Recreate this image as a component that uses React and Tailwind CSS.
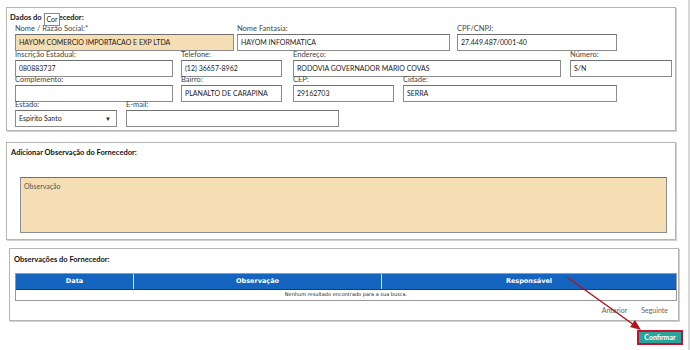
import React from "react";

const Field = ({ label, value, w, ml = "", bg = "bg-white", select = false }) => (
  <div className={`flex flex-col ${w} ${ml}`}>
    <span className="text-[7.5px] leading-[9px] text-[#444] h-[9px] mb-[1px] whitespace-nowrap">
      {label}
    </span>
    <div
      className={`h-[17px] border border-[#8c8c8c] border-t-[#6f6f6f] ${bg} flex items-center px-[3px] text-[7px] text-[#222] justify-between`}
    >
      <span className="whitespace-nowrap">{value}</span>
      {select && <span className="text-[6px] text-[#222] mr-[2px]">▼</span>}
    </div>
  </div>
);

const Panel = ({ className, children }) => (
  <div
    className={`relative border border-[#b5b5b5] shadow-[1px_1px_0_#d0d0d0] bg-white ${className}`}
  >
    {children}
  </div>
);

const App = () => {
  return (
    <div
      className="relative w-[690px] h-[350px] bg-white overflow-hidden"
      style={{ fontFamily: "Lato, 'Noto Sans', sans-serif" }}
    >
      <div className="absolute right-0 top-0 w-[2px] h-full bg-[#d8d8d8]" />

      <div className="pt-[7px] pl-[6px] w-[676px]">
        {/* Dados do fornecedor */}
        <Panel className="h-[124px] pl-[8px] pt-[5px]">
          <div className="text-[7.5px] font-bold text-[#111] leading-[9px] -ml-[5px]">
            Dados do Fornecedor:
          </div>
          <div className="absolute left-[37px] top-[5px] w-[16px] h-[13px] border border-[#888] bg-white text-[7px] flex items-center justify-center text-[#222]">
            Cor
          </div>
          <div className="flex mt-[2px]">
            <Field label="Nome / Razão Social:*" value="HAYOM COMERCIO IMPORTACAO E EXP LTDA" w="w-[219px]" bg="bg-[#f5deb3]" />
            <Field label="Nome Fantasia:" value="HAYOM INFORMATICA" w="w-[213px]" ml="ml-[3px]" />
            <Field label="CPF/CNPJ:" value="27.449.487/0001-40" w="w-[160px]" ml="ml-[7px]" />
          </div>
          <div className="flex mt-[-1px]">
            <Field label="Inscrição Estadual:" value="080883737" w="w-[158px]" />
            <Field label="Telefone:" value="(12) 36657-8962" w="w-[101px]" ml="ml-[8px]" />
            <Field label="Endereço:" value="RODOVIA GOVERNADOR MARIO COVAS" w="w-[268px]" ml="ml-[11px]" />
            <Field label="Número:" value="S/N" w="w-[102px]" ml="ml-[9px]" />
          </div>
          <div className="flex mt-[-2px]">
            <Field label="Complemento:" value="" w="w-[158px]" />
            <Field label="Bairro:" value="PLANALTO DE CARAPINA" w="w-[101px]" ml="ml-[8px]" />
            <Field label="CEP:" value="29162703" w="w-[101px]" ml="ml-[11px]" />
            <Field label="Cidade:" value="SERRA" w="w-[214px]" ml="ml-[9px]" />
          </div>
          <div className="flex mt-[-2px]">
            <Field label="Estado:" value="Espirito Santo" w="w-[102px]" select />
            <Field label="E-mail:" value="" w="w-[213px]" ml="ml-[9px]" />
          </div>
        </Panel>

        {/* Adicionar observação */}
        <Panel className="h-[98px] mt-[11px] pt-[5px] pl-[4px]">
          <div className="text-[7.5px] font-bold text-[#111] leading-[9px]">
            Adicionar Observação do Fornecedor:
          </div>
          <div className="ml-[9px] mt-[20px] w-[647px] h-[56px] bg-[#f5deb3] border border-[#8c8c8c] border-t-[#6f6f6f] px-[3px] pt-[3px] text-[7px] text-[#555]">
            Observação
          </div>
        </Panel>
      </div>

      {/* Observações do fornecedor */}
      <div className="pl-[9px] mt-[8px] w-[679px]">
        <Panel className="h-[73px] pl-[4px] pt-[6px] pr-[1px]">
          <div className="text-[7.5px] font-bold text-[#111] leading-[9px]">
            Observações do Fornecedor:
          </div>
          <div
            className="mt-[9px] ml-[1px] w-[662px] border border-[#999]"
            style={{ fontFamily: "'DejaVu Sans', Verdana, sans-serif" }}
          >
            <div className="flex h-[16px] bg-[#1565c0] border-b border-[#0d3f80] text-white text-[6.5px] font-bold">
              <div className="w-[118px] flex items-center justify-center border-r border-[#d8e2f0]">Data</div>
              <div className="w-[248px] flex items-center justify-center border-r border-[#d8e2f0]">Observação</div>
              <div className="flex-1 flex items-center justify-center">Responsável</div>
            </div>
            <div className="h-[10px] flex items-center justify-center text-[5px] text-[#222] bg-white">
              Nenhum resultado encontrado para a sua busca.
            </div>
          </div>
          <div className="flex justify-end gap-[14px] pr-[9px] mt-[4px] text-[7px] text-[#666]">
            <span>Anterior</span>
            <span>Seguinte</span>
          </div>
        </Panel>
      </div>

      <div className="flex justify-end pr-[7px] mt-[9px]">
        <button className="w-[46px] h-[15px] border-2 border-[#c8102e] bg-[#26a69a] text-white text-[7px] font-bold flex items-center justify-center">
          Confirmar
        </button>
      </div>

      <svg className="absolute left-0 top-0 pointer-events-none" width="690" height="350">
        <line x1="567" y1="277" x2="634" y2="325" stroke="#b0151f" strokeWidth="1.5" />
        <polygon points="641,330 630,327 635,320" fill="#b0151f" />
      </svg>
    </div>
  );
};

export default App;
